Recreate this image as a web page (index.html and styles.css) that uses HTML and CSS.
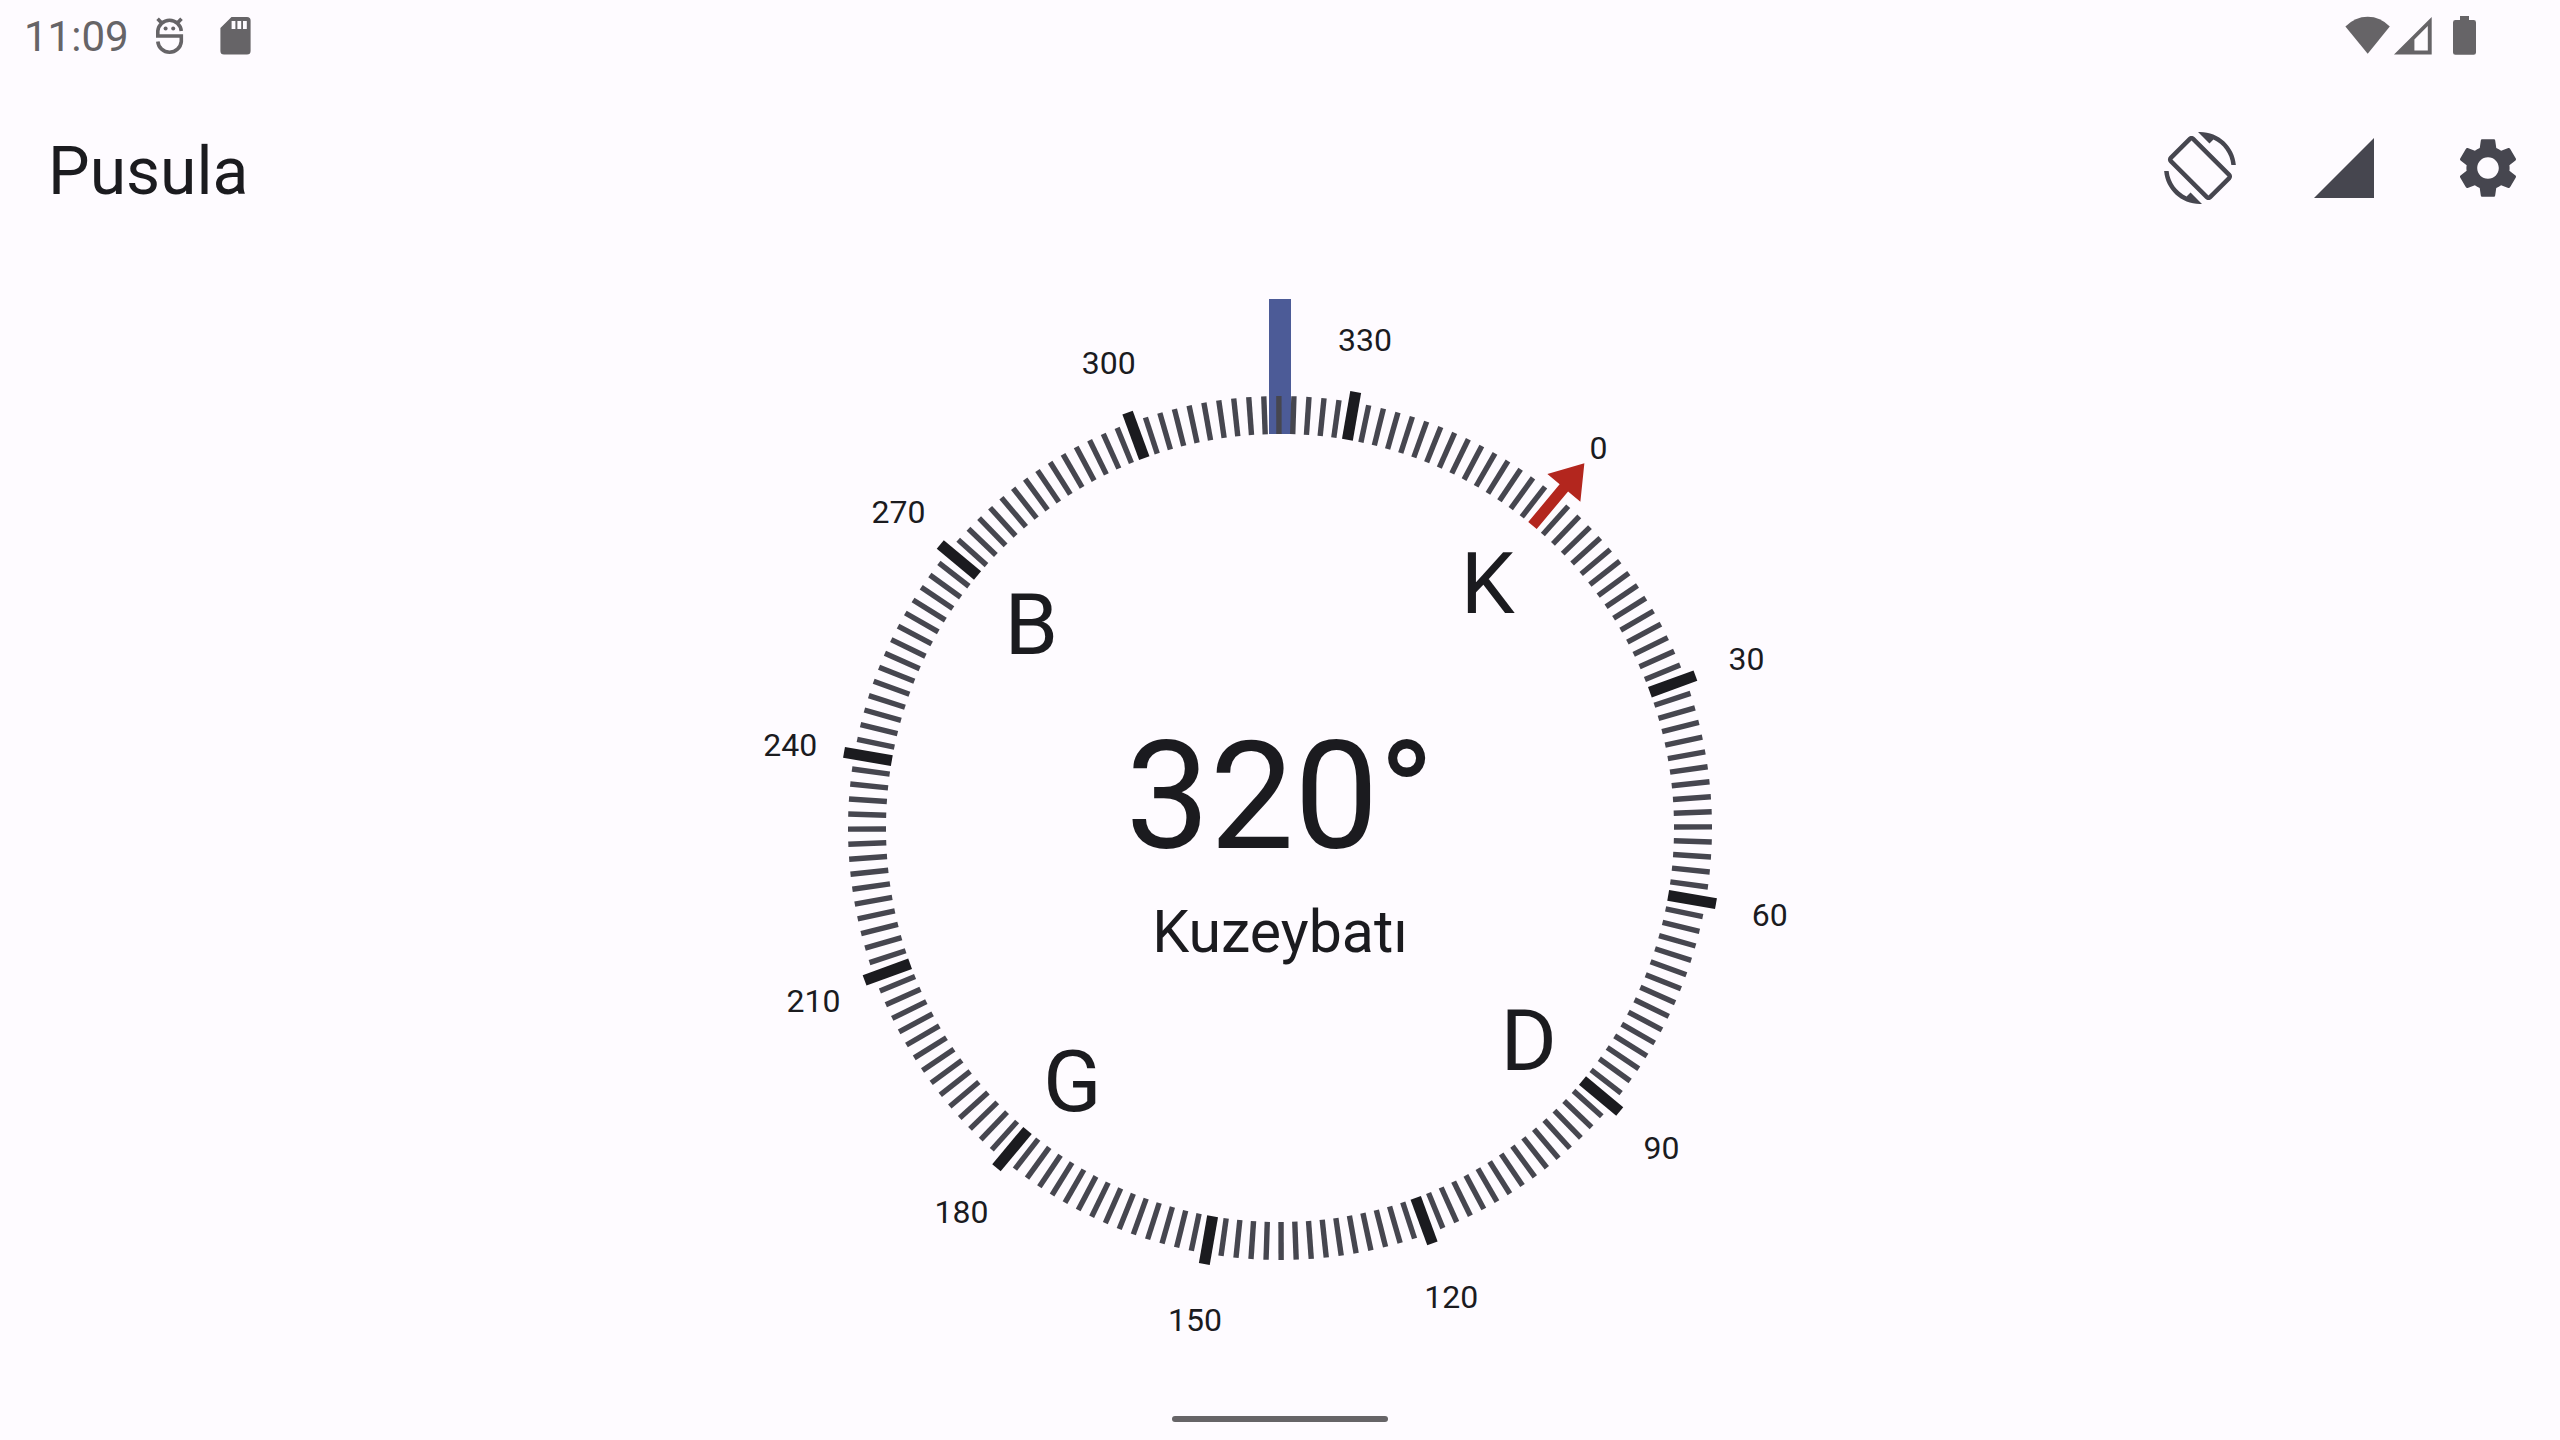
FILE: index.html
```html
<!DOCTYPE html>
<html lang="tr">
<head>
<meta charset="utf-8">
<meta name="viewport" content="width=device-width, initial-scale=1">
<title>Pusula</title>
<link rel="stylesheet" href="styles.css">
</head>
<body>
<div class="status-bar">
  <span class="clock">11:09</span>
  <svg class="status-icon" viewBox="0 0 44 44" aria-hidden="true">
    <path class="outline" d="M32.3 17A11.800 11.800 0 0 0 8.800 17V22H32.3V27.500A11.800 11.800 0 0 1 8.800 27.500M8.600 4.800L12.500 8.800M32.5 4.800L28.600 8.800"/>
    <circle cx="16.6" cy="14.4" r="2"/>
    <circle cx="24.2" cy="14.4" r="2"/>
  </svg>
  <svg class="status-icon" viewBox="0 0 44 44" aria-hidden="true">
    <path fill-rule="evenodd" d="M18.5 3H34a3.6 3.6 0 0 1 3.6 3.6V37a3.6 3.6 0 0 1-3.6 3.6H11A3.6 3.6 0 0 1 7.4 37V14zM18.6 7v8h3.8V7zM24.4 7v8h3.8V7zM30 7v8h3.8V7z"/>
  </svg>
  <span class="spacer"></span>
  <svg class="status-icon wifi" viewBox="0 0 46 44" aria-hidden="true">
    <path d="M-.6 12.6Q9 2.8 21.7 2.8T43.8 12.6L21.7 39.8z"/>
  </svg>
  <svg class="status-icon" viewBox="0 0 44 44" aria-hidden="true">
    <path fill-rule="evenodd" d="M2 40.5L39.7 3V40.5zM22.4 36.5H35.8V12L22.4 25.4z"/>
  </svg>
  <svg class="status-icon" viewBox="0 0 44 44" aria-hidden="true">
    <path d="M24 2h9v4h4.600a2.400 2.400 0 0 1 2.400 2.400v30a2.400 2.400 0 0 1-2.400 2.400H19.400a2.400 2.400 0 0 1-2.400-2.400v-30A2.400 2.400 0 0 1 19.400 6H24z"/>
  </svg>
</div>

<header class="app-bar">
  <h1 class="title">Pusula</h1>
  <button class="action" type="button" aria-label="Ekranı döndür">
    <svg class="action-icon" viewBox="0 0 24 24"><path d="M16.480 2.520c3.270 1.550 5.610 4.720 5.970 8.480h1.500C23.440 4.840 18.290 0 12 0l-.66.03 3.810 3.810 1.330-1.320zm-6.250-.77c-.59-.59-1.540-.59-2.120 0L1.750 8.110c-.59.59-.59 1.540 0 2.120l12.020 12.020c.59.59 1.540.59 2.120 0l6.360-6.360c.59-.59.59-1.540 0-2.120L10.230 1.750zm4.600 19.440L2.810 9.170l6.360-6.360 12.020 12.020-6.360 6.360zm-7.310.29C4.250 19.940 1.910 16.760 1.550 13H.05C.56 19.160 5.710 24 12 24l.66-.03-3.810-3.810-1.330 1.320z"/></svg>
  </button>
  <button class="action" type="button" aria-label="Sensör durumu">
    <svg class="action-icon" viewBox="0 0 24 24"><path d="M2 22h20V2z"/></svg>
  </button>
  <button class="action" type="button" aria-label="Ayarlar">
    <svg class="action-icon" viewBox="0 0 24 24"><path d="M19.140 12.940c.04-.3.06-.61.06-.94 0-.32-.02-.64-.07-.94l2.030-1.580c.18-.14.23-.41.12-.61l-1.920-3.320c-.12-.22-.37-.29-.59-.22l-2.390.96c-.5-.38-1.030-.7-1.620-.94l-.36-2.540c-.04-.24-.24-.41-.48-.41h-3.840c-.24 0-.43.17-.47.41l-.36 2.540c-.59.24-1.130.57-1.620.94l-2.390-.96c-.22-.08-.47 0-.59.22L2.740 8.870c-.12.21-.08.47.12.61l2.030 1.580c-.05.3-.09.63-.09.94s.02.64.07.94l-2.030 1.580c-.18.14-.23.41-.12.61l1.920 3.320c.12.22.37.29.59.22l2.390-.96c.5.38 1.030.7 1.620.94l.36 2.540c.05.24.24.41.48.41h3.840c.24 0 .44-.17.47-.41l.36-2.540c.59-.24 1.130-.56 1.620-.94l2.390.96c.22.08.47 0 .59-.22l1.920-3.320c.12-.22.07-.47-.12-.61l-2.010-1.580zM12 15.600c-1.980 0-3.600-1.620-3.600-3.600s1.620-3.600 3.600-3.600 3.600 1.620 3.600 3.600-1.620 3.600-3.600 3.600z"/></svg>
  </button>
</header>

<main class="content">
  <svg class="compass" viewBox="-588 -588 1176 1176" role="img" aria-label="Pusula kadranı">
    <rect class="marker" x="-11" y="-529" width="22" height="135"/>
    <g id="dial"></g>
    <text class="degrees" x="0" y="20">320°</text>
    <text class="direction" x="0" y="124">Kuzeybatı</text>
  </svg>
</main>

<footer class="nav-bar"><span class="handle"></span></footer>
<script src="compass.js"></script>
</body>
</html>
```
FILE: styles.css
```css
* {
  box-sizing: border-box;
}

body {
  margin: 0;
  height: 100vh;
  display: flex;
  flex-direction: column;
  background: #fefbff;
  color: #1b1b1f;
  font-family: Roboto, "Noto Sans", sans-serif;
}

.status-bar {
  flex: none;
  height: 72px;
  padding: 0 80px 0 24px;
  display: flex;
  align-items: center;
  color: #666467;
}

.clock {
  padding-top: 2px;
  font-size: 42px;
  line-height: 48px;
}

.status-icon {
  width: 44px;
  height: 44px;
  fill: currentColor;
  overflow: visible;
}

.clock + .status-icon,
.status-icon:nth-of-type(2) {
  margin-left: 20px;
}

.wifi {
  width: 46px;
}

.outline {
  fill: none;
  stroke: currentColor;
  stroke-width: 3.6;
}

.spacer {
  flex: 1;
}

.app-bar {
  flex: none;
  padding: 24px 0 0 48px;
  display: flex;
  align-items: center;
}

.title {
  flex: 1;
  margin: 0;
  padding-top: 8px;
  font-size: 66px;
  line-height: 78px;
  font-weight: 400;
}

.action {
  width: 144px;
  height: 144px;
  padding: 0;
  border: 0;
  background: none;
  color: #46464f;
  display: flex;
  align-items: center;
  justify-content: center;
}

.action-icon {
  width: 72px;
  height: 72px;
  fill: currentColor;
}

.content {
  flex: 1;
  min-height: 0;
  display: flex;
  justify-content: center;
}

.compass {
  width: 100%;
  height: 100%;
  fill: currentColor;
  text-anchor: middle;
}

.marker {
  fill: #4c5b97;
}

.minor {
  stroke: #46464f;
  stroke-width: 5.4;
}

.major {
  stroke: #1b1b1f;
  stroke-width: 11;
}

.north {
  fill: #b3261e;
}

.number {
  font-size: 32px;
}

.cardinal {
  font-size: 86px;
}

.degrees {
  font-size: 150px;
}

.direction {
  font-size: 59px;
}

.nav-bar {
  flex: none;
  height: 24px;
  display: flex;
  justify-content: center;
}

.handle {
  width: 216px;
  height: 6px;
  border-radius: 3px;
  background: #666467;
}
```
FILE: compass.js
```js
const SVG_NS = "http://www.w3.org/2000/svg";
const HEADING = 320.15;
const CARDINALS = { 0: "K", 90: "D", 180: "G", 270: "B" };
const dial = document.getElementById("dial");

function add(name, attributes, text) {
  const node = document.createElementNS(SVG_NS, name);
  for (const key in attributes) node.setAttribute(key, attributes[key]);
  if (text !== undefined) node.textContent = text;
  dial.appendChild(node);
}

// Text stays upright; only its anchor moves round the dial.
function addLabel(className, angle, radius, drop, text) {
  const rad = (angle * Math.PI) / 180;
  add("text", {
    class: className,
    x: Math.sin(rad) * radius,
    y: -Math.cos(rad) * radius + drop
  }, text);
}

for (let degree = 0; degree < 360; degree += 2) {
  const angle = degree - HEADING;
  const transform = `rotate(${angle})`;
  const major = degree % 30 === 0;

  if (degree === 0) {
    add("path", { class: "north", transform, d: "M0-475L21.500-443H5.500V-394H-5.500V-443H-21.500z" });
  } else {
    add("line", {
      class: major ? "major" : "minor",
      transform,
      y1: -394,
      y2: major ? -442.5 : -432
    });
  }

  if (major) addLabel("number", angle, 497, 13, degree);
  if (CARDINALS[degree]) addLabel("cardinal", angle, 324, 34, CARDINALS[degree]);
}
```
